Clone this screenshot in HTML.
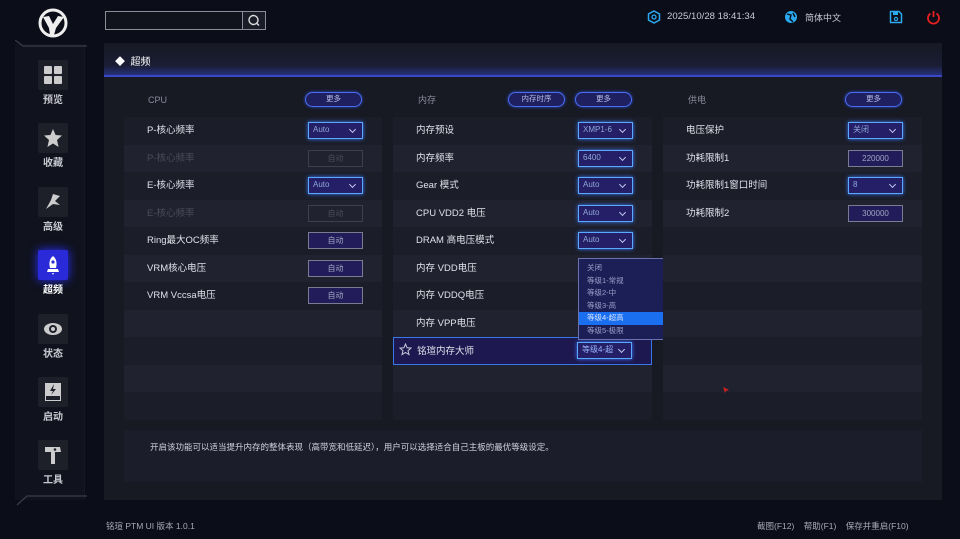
<!DOCTYPE html><html><head><meta charset="utf-8"><style>
*{margin:0;padding:0;box-sizing:border-box}
body{width:960px;height:539px;background:#0b0d18;font-family:"Liberation Sans","Noto Sans CJK SC",sans-serif;color:#d8dae6;position:relative;overflow:hidden;font-size:9px}
.abs{position:absolute}
.side{left:15px;top:44px;width:70px;height:456px;background:#10121d;border-right:1px solid #151826}
.nav{position:absolute;left:38px;width:30px;height:30px;background:#1e2029;border-radius:2px}
.nav svg{position:absolute;left:5px;top:5px}
.navl{position:absolute;left:30px;width:46px;text-align:center;font-size:10px;font-weight:bold;color:#c8c8d0}
.main{left:104px;top:43px;width:838px;height:457px;background:#171923}
.hdr{left:104px;top:43px;width:838px;height:34px;background:linear-gradient(180deg,#171923 0%,#1a1d34 70%,#26307a 100%);border-bottom:2px solid #3a48c8}
.col{position:absolute;top:117px;width:258px}
.row{height:27.5px;position:relative;font-size:9.5px;line-height:27.5px;padding-left:23px;color:#e0e2ea}
.row:nth-child(odd){background:#1b1d29}
.row:nth-child(even){background:#20222f}
.dd{position:absolute;right:19px;top:5px;width:55px;height:17px;border:1.5px solid #5aa8ff;background:#241f66;box-shadow:0 0 4px #3a7bff;font-size:8px;line-height:14px;padding-left:4px;color:#8fa8d8}
.dd:after{content:"";position:absolute;right:7px;top:4px;width:4px;height:4px;border-right:1.2px solid #c0c8f0;border-bottom:1.2px solid #c0c8f0;transform:rotate(45deg)}
.bx{position:absolute;right:19px;top:5px;width:55px;height:17px;border:1.2px solid #7a7c90;background:#221d5a;font-size:8px;line-height:15px;text-align:center;color:#a0a4c0}
.dis{color:#4a4c5a}
.dis .bx{background:transparent;border-color:#3d3f4c;color:#4a4c58}
.pill{position:absolute;height:15px;border:1.5px solid #4a6cf0;border-radius:8px;background:#1e2060;font-size:7.5px;line-height:12px;text-align:center;color:#b8c0e8;box-shadow:0 0 3px #3050d0}
.ct{position:absolute;top:94px;font-size:9px;line-height:12px;height:12px;color:#8a8c9c}
</style></head><body>
<div class="abs side"></div>
<svg class="abs" style="left:15px;top:40px" width="75" height="8"><path d="M0 0 L8 6 L72 6" stroke="#3a3d4c" fill="none" stroke-width="1.2"/></svg>
<svg class="abs" style="left:15px;top:495px" width="75" height="12"><path d="M2 10 L12 1 L72 1" stroke="#3a3d4c" fill="none" stroke-width="1.2"/></svg>
<svg class="abs" style="left:37px;top:8px" width="32" height="30" viewBox="0 0 32 30"><circle cx="16" cy="15" r="13" fill="none" stroke="#eee" stroke-width="3"/><path d="M6 9 L12 8 L16 16 L21 8 L27 9 L19 20 L17 27 L13 27 L12 20 Z" fill="#eee"/></svg>
<div class="nav" style="top:60px"><svg width="20" height="20"><rect x="1" y="1" width="8" height="8" rx="1" fill="#ccc"/><rect x="11" y="1" width="8" height="8" rx="1" fill="#ccc"/><rect x="1" y="11" width="8" height="8" rx="1" fill="#ccc"/><rect x="11" y="11" width="8" height="8" rx="1" fill="#ccc"/></svg></div>
<div class="navl" style="top:91px">预览</div>
<div class="nav" style="top:123px"><svg width="20" height="20"><path d="M10 1 L12.6 7 L19 7.5 L14 12 L15.6 19 L10 15.5 L4.4 19 L6 12 L1 7.5 L7.4 7 Z" fill="#ccc"/></svg></div>
<div class="navl" style="top:154px">收藏</div>
<div class="nav" style="top:187px"><svg width="20" height="20"><path d="M3 17 L8 8 L10 2 L17 4 L12 9 L17 13 L10 12 Z" fill="#ccc"/></svg></div>
<div class="navl" style="top:218px">高级</div>
<div class="nav" style="top:250px;background:#2a2ad8;box-shadow:0 0 10px #2a30ff"><svg width="20" height="20"><path d="M10 1 C14 4 14 9 13 13 L7 13 C6 9 6 4 10 1Z M5 14 L15 14 L16 17 L4 17 Z M9 18 L11 18 L10 20Z" fill="#fff"/><circle cx="10" cy="7" r="1.6" fill="#2a2ad8"/></svg></div>
<div class="navl" style="top:281px;color:#fff">超频</div>
<div class="nav" style="top:314px"><svg width="20" height="20"><ellipse cx="10" cy="10" rx="9" ry="6" fill="#ccc"/><circle cx="10" cy="10" r="4" fill="#1e2029"/><circle cx="10" cy="10" r="2" fill="#ccc"/></svg></div>
<div class="navl" style="top:345px">状态</div>
<div class="nav" style="top:377px"><svg width="20" height="20"><rect x="2" y="1" width="16" height="18" fill="#ccc"/><path d="M11 2 L7 9 L10 9 L8 13 L13 7 L10 7 Z" fill="#1e2029"/><rect x="3" y="14" width="14" height="4" fill="#1e2029"/></svg></div>
<div class="navl" style="top:408px">启动</div>
<div class="nav" style="top:440px"><svg width="20" height="20"><path d="M2 2 L17 2 L18 7 L12 7 L12 19 L8 19 L8 7 L2 7 Z" fill="#ccc"/><circle cx="12" cy="4.5" r="1.3" fill="#1e2029"/></svg></div>
<div class="navl" style="top:471px">工具</div>

<div class="abs" style="left:105px;top:11px;width:138px;height:19px;border:1px solid #8a8c98;background:#10121c"></div>
<div class="abs" style="left:242px;top:11px;width:24px;height:19px;border:1px solid #8a8c98;background:#1a1c28"><svg width="22" height="17"><circle cx="10.5" cy="8" r="4.5" stroke="#ddd" fill="none" stroke-width="1.4"/><path d="M14 11.5 L16 13.5" stroke="#ddd" stroke-width="1.4"/></svg></div>
<svg class="abs" style="left:647px;top:10px" width="14" height="14"><path d="M7 1 L12.5 4 L12.5 10 L7 13 L1.5 10 L1.5 4Z" fill="none" stroke="#2aa8f0" stroke-width="1.5"/><circle cx="7" cy="7" r="2" fill="none" stroke="#2aa8f0" stroke-width="1.3"/></svg>
<div class="abs" style="left:667px;top:11px;font-size:9.6px;color:#c8cad4">2025/10/28 18:41:34</div>
<svg class="abs" style="left:784px;top:10px" width="14" height="14"><circle cx="7" cy="7" r="6" fill="#2aa8f0"/><path d="M3 4 L7 5 L6 9 L9 12 M9 3 L11 7" stroke="#0b0d18" stroke-width="1.4" fill="none"/></svg>
<div class="abs" style="left:805px;top:11px;font-size:9px;color:#c8cad4">简体中文</div>
<svg class="abs" style="left:889px;top:10px" width="14" height="14"><path d="M1.5 1.5 L10 1.5 L12.5 4 L12.5 12.5 L1.5 12.5Z" fill="none" stroke="#2aa8f0" stroke-width="1.5"/><rect x="4" y="2" width="5" height="3" fill="#2aa8f0"/><circle cx="7" cy="9" r="1.6" fill="none" stroke="#2aa8f0" stroke-width="1.2"/></svg>
<svg class="abs" style="left:926px;top:10px" width="15" height="15"><path d="M4.5 3.5 A5.5 5.5 0 1 0 10.5 3.5" fill="none" stroke="#e82020" stroke-width="1.8"/><path d="M7.5 1 L7.5 7" stroke="#e82020" stroke-width="1.8"/></svg>

<div class="abs main"></div>
<div class="abs hdr"></div>
<div class="abs" style="left:115px;top:53px;font-size:10px;color:#fff">◆&nbsp;&nbsp;超频</div>

<div class="ct" style="left:148px">CPU</div>
<div class="pill" style="left:305px;top:92px;width:57px">更多</div>
<div class="ct" style="left:418px">内存</div>
<div class="pill" style="left:508px;top:92px;width:57px">内存时序</div>
<div class="pill" style="left:575px;top:92px;width:57px">更多</div>
<div class="ct" style="left:688px">供电</div>
<div class="pill" style="left:845px;top:92px;width:57px">更多</div>

<div class="col" style="left:124px">
<div class="row">P-核心频率<div class="dd">Auto</div></div>
<div class="row dis">P-核心频率<div class="bx">自动</div></div>
<div class="row">E-核心频率<div class="dd">Auto</div></div>
<div class="row dis">E-核心频率<div class="bx">自动</div></div>
<div class="row">Ring最大OC频率<div class="bx">自动</div></div>
<div class="row">VRM核心电压<div class="bx">自动</div></div>
<div class="row">VRM Vccsa电压<div class="bx">自动</div></div>
<div class="row"></div><div class="row"></div><div class="row"></div><div class="row"></div>
</div>
<div class="col" style="left:393px;width:259px">
<div class="row">内存预设<div class="dd">XMP1-6</div></div>
<div class="row">内存频率<div class="dd">6400</div></div>
<div class="row">Gear 模式<div class="dd">Auto</div></div>
<div class="row">CPU VDD2 电压<div class="dd">Auto</div></div>
<div class="row">DRAM 高电压模式<div class="dd">Auto</div></div>
<div class="row">内存 VDD电压</div>
<div class="row">内存 VDDQ电压</div>
<div class="row">内存 VPP电压</div>
<div class="row" style="background:#1e1850;border:1.5px solid #3a78e8">铭瑄内存大师<div class="dd" style="top:3.5px;color:#9ab8ff">等级4-超</div></div>
<div class="row"></div><div class="row"></div>
</div>
<svg class="abs" style="left:399px;top:343px" width="13" height="13"><path d="M6.5 1 L8.1 4.8 L12 5.1 L9 7.7 L10 11.6 L6.5 9.5 L3 11.6 L4 7.7 L1 5.1 L4.9 4.8Z" fill="none" stroke="#c8c8d8" stroke-width="1"/></svg>
<div class="abs" style="left:578px;top:258px;width:86px;height:82px;background:#1c1e56;border:1.5px solid #6a72b0;font-size:7.5px;color:#9aa0c8;padding-top:3px">
<div style="height:12.6px;padding-left:8px">关闭</div>
<div style="height:12.6px;padding-left:8px">等级1-常规</div>
<div style="height:12.6px;padding-left:8px">等级2-中</div>
<div style="height:12.6px;padding-left:8px">等级3-高</div>
<div style="height:12.6px;padding-left:8px;background:#1a6ef0;color:#d8e4ff">等级4-超高</div>
<div style="height:12.6px;padding-left:8px">等级5-极限</div>
</div>
<div class="col" style="left:663px;width:259px">
<div class="row">电压保护<div class="dd">关闭</div></div>
<div class="row">功耗限制1<div class="bx">220000</div></div>
<div class="row">功耗限制1窗口时间<div class="dd">8</div></div>
<div class="row">功耗限制2<div class="bx">300000</div></div>
<div class="row"></div><div class="row"></div><div class="row"></div><div class="row"></div><div class="row"></div><div class="row"></div><div class="row"></div>
</div>
<svg class="abs" style="left:722px;top:386px" width="8" height="8"><path d="M1 1 L7 4 L4 5 L3 7Z" fill="#d02020"/></svg>

<div class="abs" style="left:124px;top:430px;width:798px;height:52px;background:#1b1d2b"></div>
<div class="abs" style="left:150px;top:441px;font-size:8.5px;color:#d0d2dc">开启该功能可以适当提升内存的整体表现（高带宽和低延迟），用户可以选择适合自己主板的最优等级设定。</div>
<div class="abs" style="left:106px;top:520px;font-size:8.5px;color:#a8aab8">铭瑄 PTM UI 版本 1.0.1</div>
<div class="abs" style="left:757px;top:520px;font-size:8.5px;color:#a8aab8">截图(F12)&nbsp;&nbsp;&nbsp;&nbsp;帮助(F1)&nbsp;&nbsp;&nbsp;&nbsp;保存并重启(F10)</div>
</body></html>
